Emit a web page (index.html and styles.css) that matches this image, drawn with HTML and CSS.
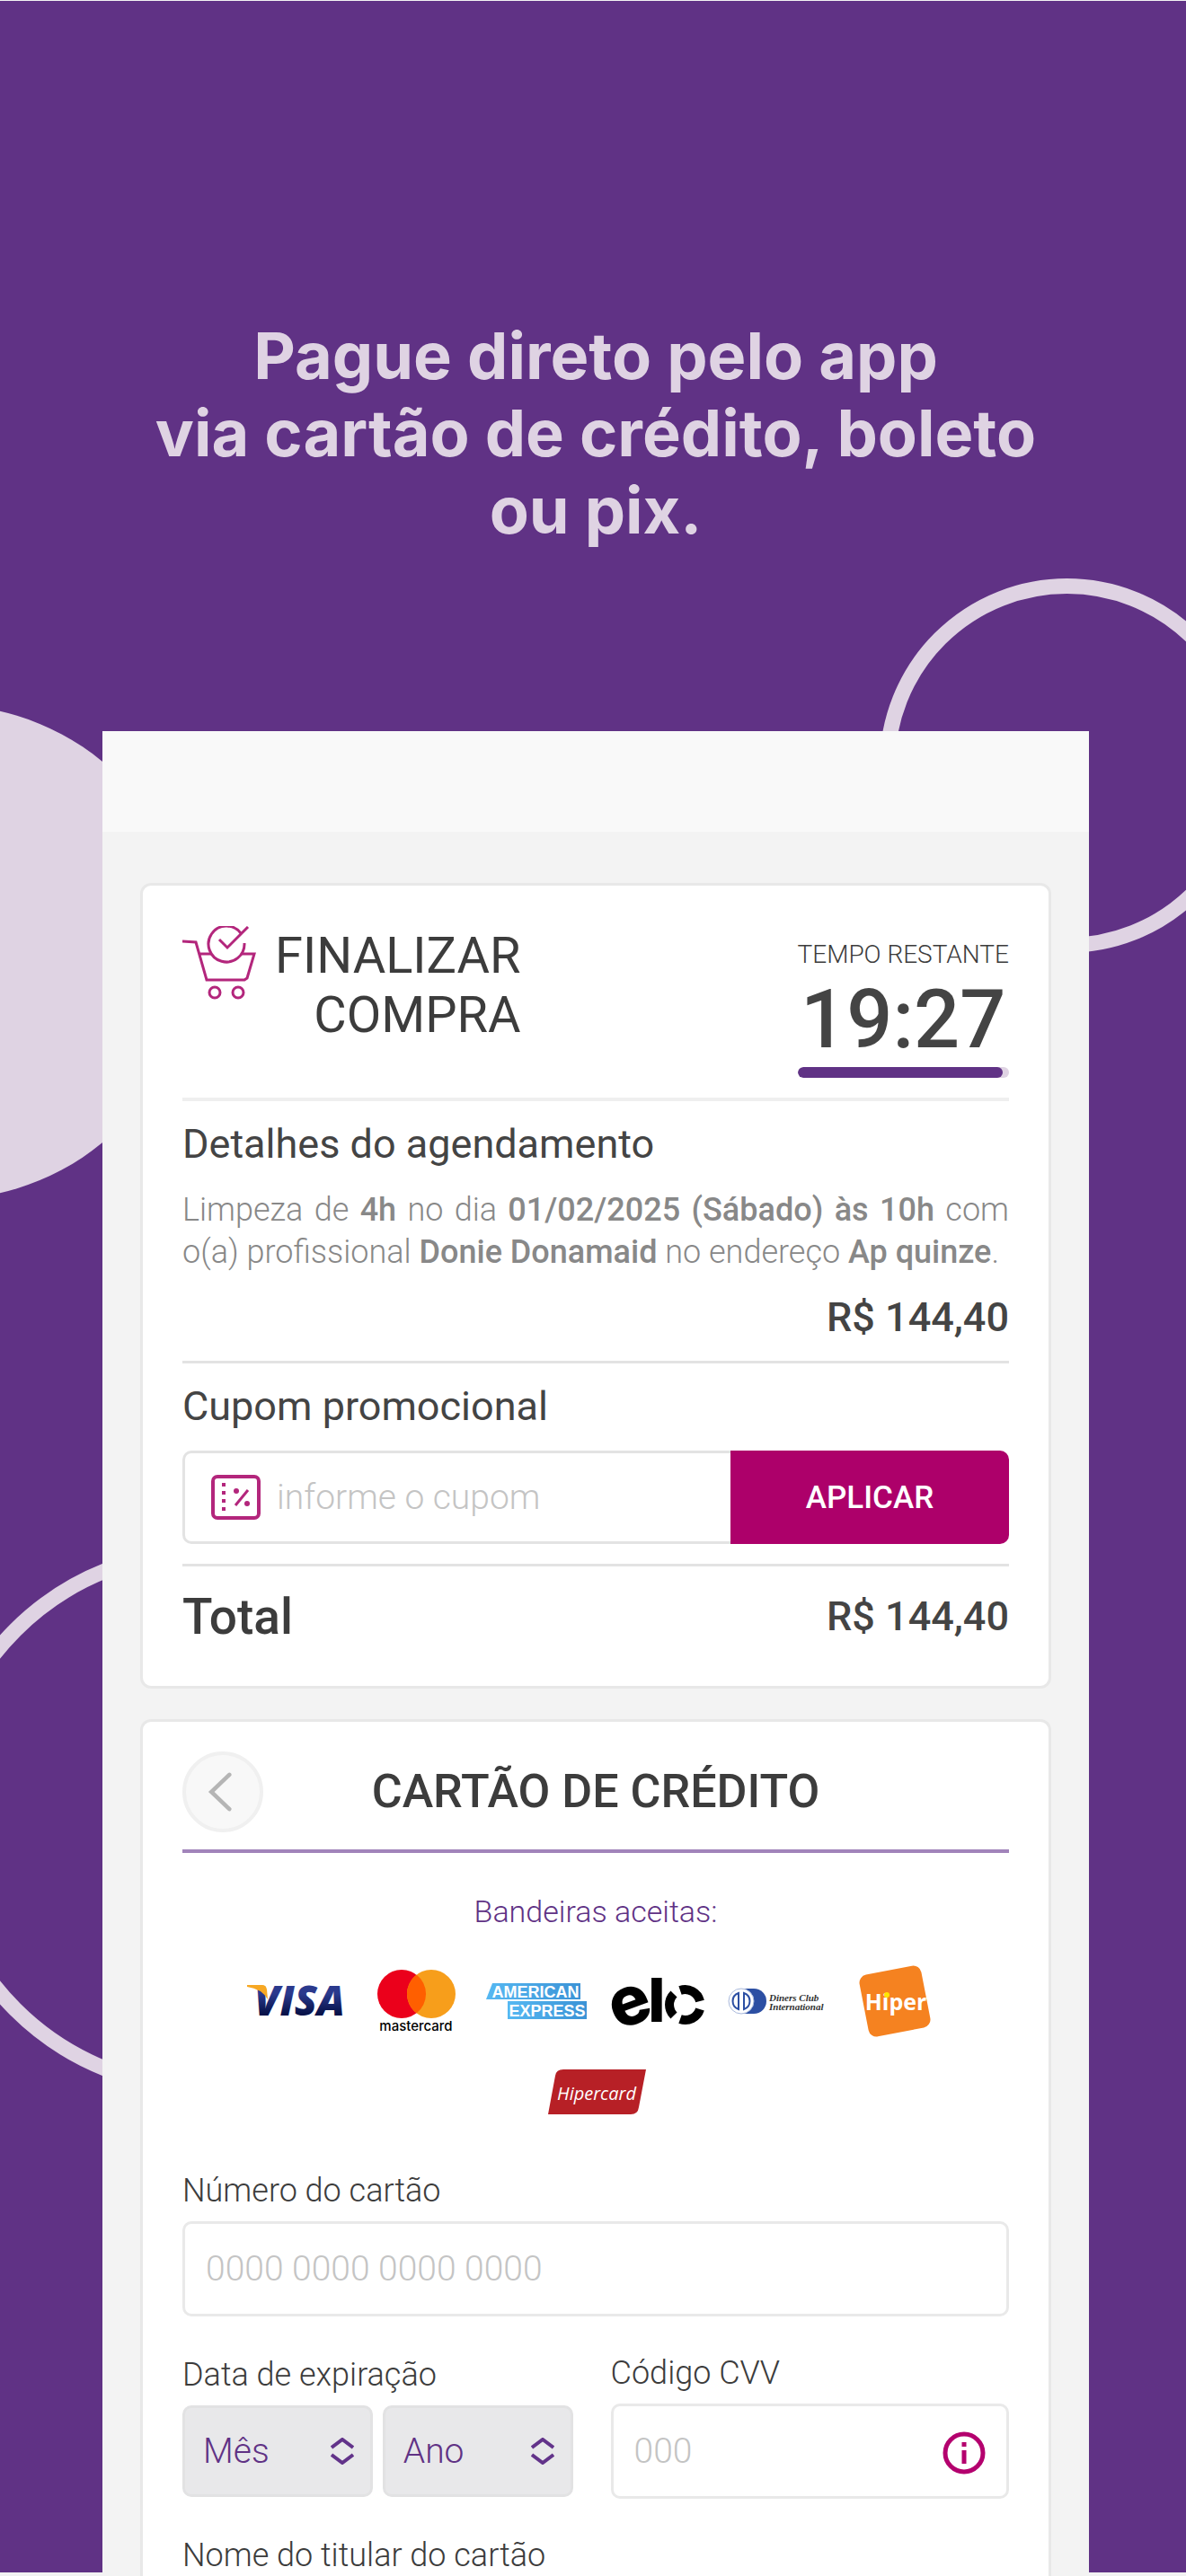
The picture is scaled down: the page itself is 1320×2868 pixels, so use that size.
FILE: index.html
```html
<!DOCTYPE html>
<html lang="pt-BR">
<head>
  <meta charset="UTF-8">
  <title>Finalizar compra</title>
  <meta name="viewport" content="width=device-width, initial-scale=1.0">
  <link rel="stylesheet" href="styles.css">
</head>
<body>

<div class="page">

  <!-- FUNDO -->
  <div class="fundo">
    <div class="circulo anel-direita"></div>
    <div class="circulo cheio"></div>
    <div class="circulo anel-esquerda"></div>
  </div>

  <h1 class="chamada">Pague direto pelo app<br>via cartão de crédito, boleto<br>ou pix.</h1>

  <div class="tela">
    <div class="barra-topo"></div>

    <main class="conteudo">

      <!-- RESUMO DA COMPRA -->
      <section class="card resumo">
        <div class="resumo-topo">
          <div class="titulo">
            <svg class="icone-carrinho" viewBox="0 0 82 82" fill="none" stroke="#b3267c" stroke-width="3">
              <path d="M0 17l15 1 12 42h42l3-2 8-27H66M19 31h13"/>
              <path d="M65 8a20 20 0 1 0 4 11M41 15l9 9L73 1"/>
              <circle cx="36" cy="74" r="6"/>
              <circle cx="62" cy="74" r="6"/>
            </svg>
            <h2>FINALIZAR<br>COMPRA</h2>
          </div>
          <div class="timer">
            <span class="timer-label">TEMPO RESTANTE</span>
            <span class="timer-valor">19:27</span>
            <progress class="timer-barra" value="97" max="100" aria-label="Tempo restante"></progress>
          </div>
        </div>

        <div class="bloco">
          <h3>Detalhes do agendamento</h3>
          <p class="detalhes">Limpeza de <strong>4h</strong> no dia <strong>01/02/2025 (Sábado) às 10h</strong> com o(a) profissional <strong>Donie Donamaid</strong> no endereço <strong>Ap quinze</strong>.</p>
          <div class="preco">R$ 144,40</div>
        </div>

        <form class="bloco">
          <h3><label for="cupom">Cupom promocional</label></h3>
          <div class="cupom">
            <div class="cupom-campo">
              <svg class="icone-cupom" viewBox="0 0 56 50" fill="none" stroke="#b3267c">
                <rect x="2" y="2" width="51" height="46" rx="5" stroke-width="4"/>
                <path d="M14 9v32" stroke-width="4" stroke-dasharray="4 5"/>
                <path d="M27 34l14-17" stroke-width="3"/>
                <circle cx="28" cy="18" r="3" fill="#b3267c" stroke="none"/>
                <circle cx="40" cy="32" r="3" fill="#b3267c" stroke="none"/>
              </svg>
              <input type="text" id="cupom" placeholder="informe o cupom">
            </div>
            <button type="button" class="aplicar">APLICAR</button>
          </div>
        </form>

        <div class="total">
          <span class="total-label">Total</span>
          <span class="preco">R$ 144,40</span>
        </div>
      </section>

      <!-- CARTÃO DE CRÉDITO -->
      <section class="card pagamento">
        <div class="pagamento-topo">
          <button type="button" class="voltar" aria-label="Voltar">
            <svg viewBox="0 0 90 90" fill="none" stroke="#b5b5b5" stroke-width="5" stroke-linecap="round"><path d="M53 24L31 45l22 21"/></svg>
          </button>
          <h2>CARTÃO DE CRÉDITO</h2>
        </div>

        <p class="bandeiras-label">Bandeiras aceitas:</p>
        <div class="bandeiras">
          <svg viewBox="0 0 112 90" role="img" aria-label="Visa">
            <defs>
              <linearGradient id="visa" x1="0" y1="0" x2="0" y2="1">
                <stop offset="0.4" stop-color="#2a398d"/>
                <stop offset="0.75" stop-color="#08134a"/>
              </linearGradient>
            </defs>
            <text x="8" y="62" class="visa" fill="url(#visa)">VISA</text>
            <path d="M0 28h17q4 0 5 5l1 11Q16 32 0 30z" fill="#f7a823"/>
          </svg>
          <svg viewBox="0 0 112 90" role="img" aria-label="Mastercard">
            <circle cx="39" cy="38" r="27" fill="#eb001b"/>
            <circle cx="72" cy="38" r="27" fill="#f79e1b"/>
            <path d="M55.500 16.600a27 27 0 0 1 0 42.800a27 27 0 0 1 0-42.800z" fill="#ff5f00"/>
            <text x="55" y="79" class="mastercard" text-anchor="middle">mastercard</text>
          </svg>
          <svg viewBox="0 0 112 90" role="img" aria-label="American Express">
            <defs>
              <linearGradient id="amex">
                <stop offset="0" stop-color="#56b8f2"/>
                <stop offset="1" stop-color="#3b93d6"/>
              </linearGradient>
            </defs>
            <path d="M7 26h98v18H0z" fill="url(#amex)"/>
            <path d="M24 46h88v20H24z" fill="url(#amex)"/>
            <text x="55" y="42" class="amex" text-anchor="middle">AMERICAN</text>
            <text x="68" y="63" class="amex" text-anchor="middle">EXPRESS</text>
          </svg>
          <svg viewBox="0 0 112 90" role="img" aria-label="Elo">
            <text x="27" y="72" class="elo-e" text-anchor="middle" transform="rotate(-20 27 50)">e</text>
            <text x="57" y="69" class="elo-l" text-anchor="middle">l</text>
            <g fill="none" stroke="#000" stroke-width="10">
              <path d="M76 38a17 17 0 0 0 0 24"/>
              <path d="M83 34a17 17 0 0 1 22 12"/>
              <path d="M83 66a17 17 0 0 0 22-11"/>
            </g>
          </svg>
          <svg viewBox="0 0 112 90" role="img" aria-label="Diners Club International">
            <rect x="8" y="32" width="38" height="28" rx="14" fill="#2c4fa3"/>
            <circle cx="18" cy="46" r="14" fill="#fff" stroke="#a9b9dc"/>
            <path d="M15 37a9.500 9.500 0 0 0 0 18zM21 37a9.500 9.500 0 0 1 0 18z" fill="none" stroke="#2c4fa3" stroke-width="2"/>
            <text x="49" y="46" class="diners">Diners Club</text>
            <text x="49" y="56" class="diners">International</text>
          </svg>
          <svg viewBox="0 0 112 90" role="img" aria-label="Hiper">
            <rect x="21" y="11" width="70" height="70" rx="9" fill="#f58220" transform="rotate(-11 56 46)"/>
            <text x="57" y="56" class="hiper" text-anchor="middle">Hiper</text>
            <circle cx="47" cy="39" r="3" fill="#ffe600"/>
          </svg>
          <svg viewBox="0 0 112 90" role="img" aria-label="Hipercard">
            <path d="M20 20h92l-8 42q-1 8-9 8H3l8-43q1-7 9-7z" fill="#b72026"/>
            <text x="57" y="54" class="hipercard" text-anchor="middle">Hipercard</text>
          </svg>
        </div>

        <form class="dados">
          <div class="campo">
            <label for="numero">Número do cartão</label>
            <input type="text" id="numero" inputmode="numeric" placeholder="0000 0000 0000 0000">
          </div>

          <div class="linha">
            <div class="campo">
              <label for="mes">Data de expiração</label>
              <div class="selects">
                <div class="select">
                  <select id="mes"><option>Mês</option></select>
                  <svg viewBox="0 0 26 30" fill="none" stroke="#62338a" stroke-width="4"><path d="M1 11l12-9 12 9M1 19l12 9 12-9"/></svg>
                </div>
                <div class="select">
                  <select id="ano" aria-label="Ano de expiração"><option>Ano</option></select>
                  <svg viewBox="0 0 26 30" fill="none" stroke="#62338a" stroke-width="4"><path d="M1 11l12-9 12 9M1 19l12 9 12-9"/></svg>
                </div>
              </div>
            </div>
            <div class="campo">
              <label for="cvv">Código CVV</label>
              <div class="cvv">
                <input type="text" id="cvv" inputmode="numeric" placeholder="000">
                <button type="button" class="info" aria-label="O que é o CVV?">
                  <svg viewBox="0 0 48 48" fill="none" stroke="#b4006e" stroke-width="5"><circle cx="24" cy="24" r="21"/><path d="M24 21v15M24 12v5"/></svg>
                </button>
              </div>
            </div>
          </div>

          <div class="nome-titular">Nome do titular do cartão</div>
        </form>
      </section>
    </main>
  </div>
</div>

</body>
</html>
```
FILE: styles.css
```css
* {
  box-sizing: border-box;
}

body {
  font-family: Roboto, Arial, sans-serif;
  background-color: #f3f3f3;
  color: #3c3c3c;
  margin: 0;
}

h1, h2, h3, p {
  margin: 0;
  font-weight: 400;
}

button, input, select {
  font-family: inherit;
  margin: 0;
}

.page {
  position: relative;
  display: flex;
  flex-direction: column;
  min-height: 100vh;
}

/* fundo */
.fundo {
  position: absolute;
  inset: 1px 0 4px;
  overflow: hidden;
  background-color: #603285;
}

.circulo {
  position: absolute;
  border-radius: 50%;
}

.anel-direita {
  top: 643px;
  right: -76px;
  width: 417px;
  height: 417px;
  border: 17px solid #dfd3e3;
}

.cheio {
  top: 784px;
  left: -336px;
  width: 550px;
  height: 550px;
  background-color: #dfd3e3;
}

.anel-esquerda {
  top: 1718px;
  left: -79px;
  width: 614px;
  height: 614px;
  border: 17px solid #dfd3e3;
}

.chamada {
  position: relative;
  padding: 353px 108px 203px 114px;
  font-family: Inter, sans-serif;
  font-size: 72px;
  line-height: 86px;
  font-weight: 700;
  text-align: center;
  color: #dfd3e3;
}

/* tela do app */
.tela {
  position: relative;
  flex: 1;
  display: flex;
  flex-direction: column;
  margin: 0 108px 0 114px;
  background-color: #f3f3f3;
}

.barra-topo {
  height: 112px;
  background-color: #f9f9f9;
}

.conteudo {
  flex: 1;
  display: flex;
  flex-direction: column;
  gap: 34px;
  padding: 57px 42px 0;
}

.card {
  background-color: #fff;
  border: 3px solid #e8e8e8;
  border-radius: 12px;
  padding: 0 44px;
}

/* resumo */
.resumo-topo {
  display: flex;
  justify-content: space-between;
  align-items: flex-start;
  padding: 45px 0 22px;
  border-bottom: 4px solid #efefef;
}

.titulo {
  display: flex;
  gap: 21px;
}

.titulo h2 {
  font-size: 56px;
  line-height: 66px;
  text-align: right;
}

.icone-carrinho {
  width: 82px;
  height: 82px;
}

.timer {
  display: flex;
  flex-direction: column;
  padding-top: 15px;
  text-align: center;
}

.timer-label {
  font-size: 28px;
  line-height: 34px;
  font-weight: 300;
}

.timer-valor {
  margin: 6px 0 2px;
  font-size: 90px;
  line-height: 100px;
  font-weight: 500;
  color: #444;
}

.timer-barra {
  appearance: none;
  display: block;
  width: 100%;
  height: 12px;
  border: none;
  border-radius: 6px;
  overflow: hidden;
  background-color: #dfd3e3;
}

.timer-barra::-webkit-progress-bar {
  background-color: #dfd3e3;
}

.timer-barra::-webkit-progress-value {
  background-color: #603285;
  border-radius: 6px;
}

.bloco {
  padding: 22px 0;
  border-bottom: 3px solid #e3e3e3;
}

.bloco h3 {
  font-size: 45px;
  line-height: 52px;
  color: #444;
}

.detalhes {
  margin: 24px 0 23px;
  font-size: 36px;
  line-height: 47px;
  font-weight: 300;
  text-align: justify;
  color: #888;
}

.detalhes strong {
  font-weight: 500;
}

.preco {
  font-size: 45px;
  line-height: 52px;
  font-weight: 500;
  text-align: right;
  color: #444;
}

.cupom {
  display: flex;
  margin-top: 23px;
}

.cupom-campo {
  flex: 1;
  display: flex;
  align-items: center;
  gap: 17px;
  height: 104px;
  padding-left: 29px;
  border: 3px solid #e3e3e3;
  border-right: none;
  border-radius: 10px 0 0 10px;
}

.icone-cupom {
  width: 56px;
  height: 50px;
}

.cupom-campo input {
  flex: 1;
  min-width: 0;
  padding: 0;
  border: none;
  outline: none;
  font-size: 39px;
  font-weight: 300;
}

input::placeholder {
  color: #c4c4c4;
  opacity: 1;
}

.aplicar {
  width: 310px;
  border: none;
  border-radius: 0 10px 10px 0;
  background-color: #ad006a;
  color: #fff;
  font-size: 35px;
  font-weight: 500;
  cursor: pointer;
}

.total {
  display: flex;
  justify-content: space-between;
  align-items: center;
  padding: 24px 0 45px;
}

.total-label {
  font-size: 55px;
  line-height: 64px;
  font-weight: 500;
}

/* pagamento */
.pagamento {
  flex: 1;
  border-bottom: none;
  border-radius: 12px 12px 0 0;
}

.pagamento-topo {
  display: grid;
  grid-template-columns: 90px 1fr 90px;
  align-items: center;
  padding: 33px 0 19px;
  border-bottom: 4px solid #a184ba;
}

.pagamento-topo h2 {
  font-size: 52px;
  line-height: 60px;
  font-weight: 500;
  text-align: center;
}

.voltar {
  width: 90px;
  height: 90px;
  padding: 0;
  border: 4px solid #f0f0f0;
  border-radius: 50%;
  background-color: #f8f8f8;
  cursor: pointer;
}

.voltar svg {
  display: block;
}

.bandeiras-label {
  margin-top: 44px;
  font-size: 34px;
  line-height: 42px;
  font-weight: 300;
  text-align: center;
  color: #603285;
}

.bandeiras {
  display: flex;
  flex-wrap: wrap;
  justify-content: center;
  gap: 12px 21px;
  padding: 33px 50px 44px;
}

.bandeiras svg {
  width: 112px;
  height: 90px;
}

.visa {
  font: italic 800 46px "Open Sans", sans-serif;
}

.mastercard {
  font: 500 15px Inter, sans-serif;
}

.amex {
  font: 700 18px "Liberation Sans", sans-serif;
  fill: #fff;
}

.elo-e {
  font: 800 76px Inter, sans-serif;
}

.elo-l {
  font: 800 68px Inter, sans-serif;
}

.diners {
  font: italic 700 11px "Liberation Serif", serif;
  fill: #333;
}

.hiper {
  font: 700 25px "Open Sans", sans-serif;
  fill: #fff;
}

.hipercard {
  font: italic 500 20px "Open Sans", sans-serif;
  fill: #fff;
}

.dados {
  display: flex;
  flex-direction: column;
  gap: 42px;
}

.campo {
  display: flex;
  flex-direction: column;
  gap: 13px;
}

.campo label,
.nome-titular {
  font-size: 36px;
  line-height: 42px;
  font-weight: 300;
}

.campo input {
  width: 100%;
  height: 106px;
  padding: 0 23px;
  border: 3px solid #e9e9e9;
  border-radius: 10px;
  background-color: #fff;
  font-size: 39px;
  font-weight: 300;
}

.linha {
  display: grid;
  grid-template-columns: 49fr 50fr;
  gap: 42px;
  align-items: center;
}

.selects {
  display: grid;
  grid-template-columns: 1fr 1fr;
  gap: 11px;
}

.select,
.cvv {
  position: relative;
}

.select select {
  appearance: none;
  display: block;
  width: 100%;
  height: 102px;
  padding: 0 20px;
  border: 3px solid #e2e2e3;
  border-radius: 10px;
  background-color: #e8e8ea;
  color: #603285;
  font-size: 39px;
  font-weight: 300;
}

.select svg {
  position: absolute;
  top: 36px;
  right: 21px;
  width: 26px;
  height: 30px;
  pointer-events: none;
}

.info {
  position: absolute;
  top: 31px;
  right: 26px;
  width: 48px;
  height: 48px;
  padding: 0;
  border: none;
  background: none;
  cursor: pointer;
}
```
